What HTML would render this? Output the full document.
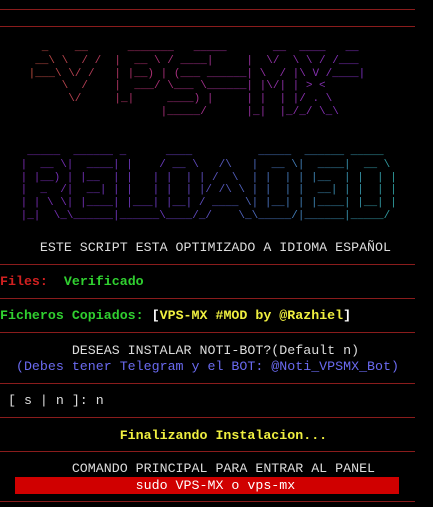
<!DOCTYPE html>
<html><head><meta charset="utf-8"><style>
html,body{margin:0;padding:0;background:#000;width:433px;height:507px;overflow:hidden;position:relative;font-family:"Liberation Mono",monospace}
.l{position:absolute;left:0;width:415px;height:1px;background:#8a1c1c}
.t{position:absolute;left:0;white-space:pre;font-size:13.3px;line-height:16px;font-weight:bold}
pre{position:absolute;margin:0;font-family:"Liberation Mono",monospace;font-size:11px;line-height:12.8px;-webkit-background-clip:text;background-clip:text;color:transparent}
</style></head><body>
<div class="l" style="top:9px"></div>
<div class="l" style="top:26px"></div>
<pre style="left:22px;top:42px;background-image:linear-gradient(90deg,#c0503a,#b03070 35%,#9a30a0 65%,#7a30c0)">   _    __      _______   _____       __  ____   __
  __\ \  / /  |  __ \ / ____|     |  \/  \ \ / /___
 |___\ \/ /   | |__) | (___ ______| \  / |\ V /____|
      \  /    |  ___/ \___ \______| |\/| | &gt; &lt;
       \/     |_|     ____) |     | |  | |/ . \
                     |_____/      |_|  |_/_/ \_\</pre>
<pre style="left:14px;top:146px;background-image:linear-gradient(90deg,#7a2ab0,#6a3ac0 40%,#4a70c0 65%,#3a90b0 85%,#30a0a0)">  _____  ______ _      ____          _____  ______ _____
 |  __ \|  ____| |    / __ \   /\   |  __ \|  ____|  __ \
 | |__) | |__  | |   | |  | | /  \  | |  | | |__  | |  | |
 |  _  /|  __| | |   | |  | |/ /\ \ | |  | |  __| | |  | |
 | | \ \| |____| |___| |__| / ____ \| |__| | |____| |__| |
 |_|  \_\______|______\____/_/    \_\_____/|______|_____/</pre>
<div class="t" style="top:240px;color:#ddd;font-weight:normal">     ESTE SCRIPT ESTA OPTIMIZADO A IDIOMA ESPAÑOL</div>
<div class="l" style="top:264px"></div>
<div class="t" style="top:274px"><span style="color:#d02020">Files:</span>  <span style="color:#30d030">Verificado</span></div>
<div class="l" style="top:298px"></div>
<div class="t" style="top:308px"><span style="color:#30d030">Ficheros Copiados:</span> <span style="color:#fff">[</span><span style="color:#f0f040">VPS-MX #MOD by @Razhiel</span><span style="color:#fff">]</span></div>
<div class="l" style="top:332px"></div>
<div class="t" style="top:343px;color:#ddd;font-weight:normal">         DESEAS INSTALAR NOTI-BOT?(Default n)</div>
<div class="t" style="top:359px;color:#6a6af0;font-weight:normal">  (Debes tener Telegram y el BOT: @Noti_VPSMX_Bot)</div>
<div class="l" style="top:383px"></div>
<div class="t" style="top:393px;color:#ddd;font-weight:normal"> [ s | n ]: n</div>
<div class="l" style="top:417px"></div>
<div class="t" style="top:428px;color:#f0f040">               Finalizando Instalacion...</div>
<div class="l" style="top:451px"></div>
<div class="t" style="top:461px;color:#ddd;font-weight:normal">         COMANDO PRINCIPAL PARA ENTRAR AL PANEL</div>
<div style="position:absolute;left:15px;top:477px;width:384px;height:17px;background:#d00000"></div>
<div class="t" style="top:478px;color:#fff;font-weight:normal">                 sudo VPS-MX o vps-mx</div>
<div class="l" style="top:501px"></div>
</body></html>
